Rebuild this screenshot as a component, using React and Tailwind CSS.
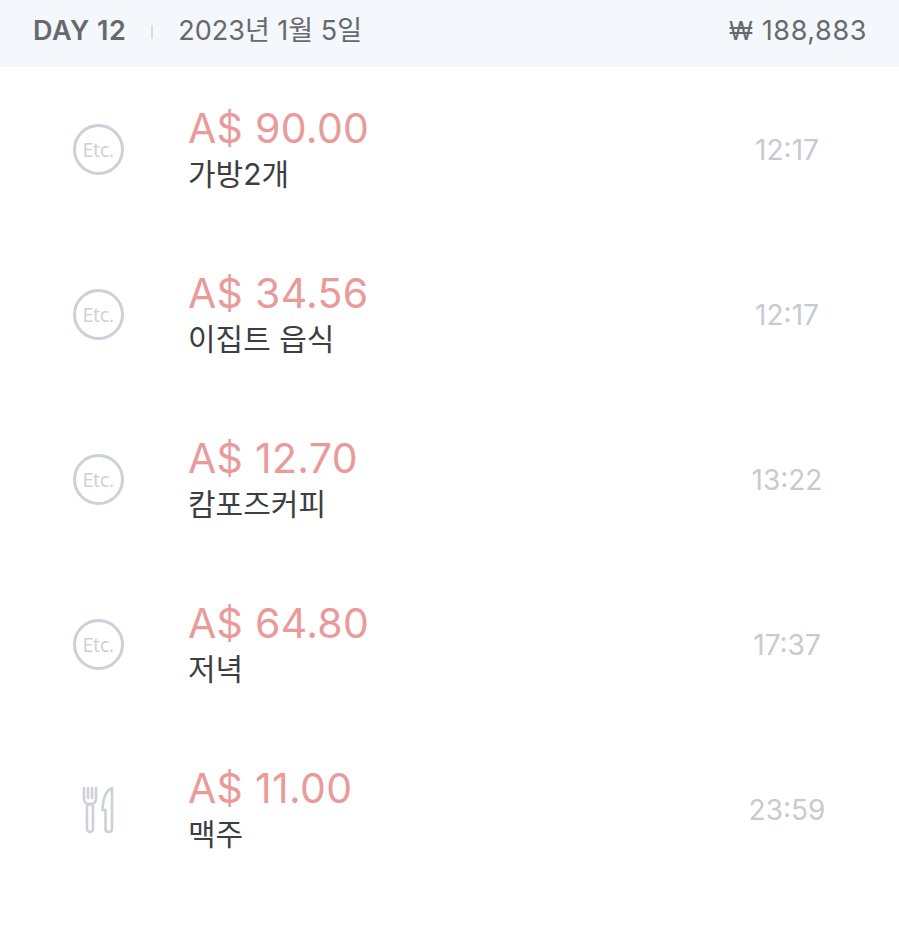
const FONT = "font-['Inter','Noto_Sans_CJK_KR',sans-serif]";

function EtcIcon() {
  return (
    <div className="w-[51px] h-[51px] rounded-full border-[3px] border-[#cdd0d8] flex items-center justify-center">
      <span className="font-['Open_Sans','Noto_Sans',sans-serif] font-medium tracking-[-0.5px] text-[20px] leading-none text-[#cdd0d8]">Etc.</span>
    </div>
  );
}

function FoodIcon() {
  return (
    <svg width="32" height="48" viewBox="0 0 32 48" fill="none" stroke="#cdd0d8" strokeWidth="2.6" strokeLinejoin="round" strokeLinecap="round">
      <path d="M2 2v11c0 3 2 5 4.500 5h3c2.500 0 4.500-2 4.500-5V2" />
      <path d="M6 2v10M10 2v10" />
      <rect x="5" y="18" width="6" height="28" rx="3" />
      <path d="M30 2c-5 2-9 9-9.500 22h3v19c0 2 1.200 3 3.200 3s3.300-1 3.300-3z" />
    </svg>
  );
}

const rows = [
  { amount: "A$ 90.00", name: "가방2개", time: "12:17", icon: "etc" },
  { amount: "A$ 34.56", name: "이집트 읍식", time: "12:17", icon: "etc" },
  { amount: "A$ 12.70", name: "캄포즈커피", time: "13:22", icon: "etc" },
  { amount: "A$ 64.80", name: "저녁", time: "17:37", icon: "etc" },
  { amount: "A$ 11.00", name: "맥주", time: "23:59", icon: "food" },
];

export default function App() {
  return (
    <div className={`w-[899px] h-[928px] bg-white overflow-hidden ${FONT}`}>
      <div className="h-[67px] bg-[#f4f7fb] flex items-center pl-[33px] pr-[32px] pb-[4px] text-[27px] text-[#67696e]">
        <span className="font-semibold tracking-[0.5px]">DAY 12</span>
        <span className="w-[2px] h-[14px] bg-[#d8dce2] ml-[25px] mr-[25px]" />
        <span>2023년 1월 5일</span>
        <span className="ml-auto tracking-[0.6px]"><span className="text-[25px]">₩</span> 188,883</span>
      </div>
      {rows.map((r) => (
        <div key={r.amount} className="h-[165px] flex items-center">
          <div className="w-[188px] flex justify-center pl-[8px]">
            {r.icon === "etc" ? <EtcIcon /> : <FoodIcon />}
          </div>
          <div className="flex-1 flex flex-col">
            <span className="text-[41px] leading-[42px] tracking-[0.3px] text-[#e99a9a] mb-[7px]">{r.amount}</span>
            <span className="text-[30px] leading-[36px] text-[#3c3e42]">{r.name}</span>
          </div>
          <div className="w-[224px] text-center text-[28px] text-[#c8cad2]">{r.time}</div>
        </div>
      ))}
    </div>
  );
}
